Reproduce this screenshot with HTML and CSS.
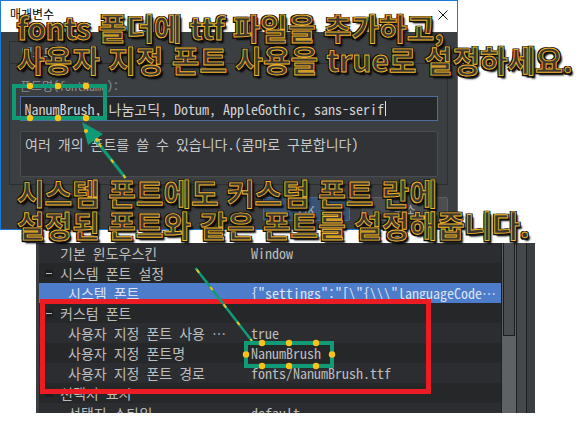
FILE: index.html
```html
<!DOCTYPE html>
<html lang="ko">
<head>
<meta charset="utf-8">
<title>매개변수</title>
<link rel="stylesheet" href="styles.css">
</head>
<body>
<div class="canvas">
  <div class="dialog">
    <div class="titlebar">
      <span class="title">매개변수</span>
      <svg class="close" width="10" height="10" viewBox="0 0 10 10"><path d="M0.5 0.5 L9.5 9.5 M9.5 0.5 L0.5 9.5" stroke="#111" stroke-width="1" fill="none"/></svg>
    </div>
    <div class="dialog-body">
      <div class="tabs"><div class="tab">텍스트</div></div>
      <div class="tabpane">
        <div class="label">폰트명(fontName):</div>
        <div class="input">NanumBrush, 나눔고딕, Dotum, AppleGothic, sans-serif<span class="caret"></span></div>
        <div class="textarea">여러 개의 폰트를 쓸 수 있습니다.(콤마로 구분합니다)</div>
      </div>
      <div class="buttons">
        <div class="btn btn-ok">OK</div>
        <div class="btn btn-cancel">취소</div>
      </div>
    </div>
  </div>

  <div class="props">
    <div class="rows">
      <div class="row odd"><span class="name lvl1">기본 윈도우스킨</span><span class="value">Window</span></div>
      <div class="row even"><span class="name cat"><span class="toggle"></span>시스템 폰트 설정</span></div>
      <div class="row selected"><span class="name lvl2">시스템 폰트</span><span class="value">{"settings":"[\"{\\\"languageCode…</span></div>
      <div class="row even"><span class="name cat"><span class="toggle"></span>커스텀 폰트</span></div>
      <div class="row odd"><span class="name lvl2">사용자 지정 폰트 사용 …</span><span class="value">true</span></div>
      <div class="row even"><span class="name lvl2">사용자 지정 폰트명</span><span class="value">NanumBrush</span></div>
      <div class="row odd"><span class="name lvl2">사용자 지정 폰트 경로</span><span class="value">fonts/NanumBrush.ttf</span></div>
      <div class="row even"><span class="name cat"><span class="toggle"></span>선택지 표시</span></div>
      <div class="row odd"><span class="name lvl2">선택지 스타일</span><span class="value">default</span></div>
    </div>
    <div class="scroll">
      <div class="track"><div class="thumb"></div></div>
      <div class="strip strip-a"></div>
      <div class="strip strip-b"></div>
    </div>
  </div>

  <svg class="annot" width="577" height="441" viewBox="0 0 577 441">
    <rect x="42.5" y="301.5" width="386" height="90" fill="none" stroke="#ec1c24" stroke-width="5"/>
    <rect x="14" y="86" width="91" height="32" fill="none" stroke="#109a76" stroke-width="4"/>
    <g fill="#f8c21a">
      <circle cx="30" cy="86" r="3.2"/><circle cx="58" cy="86" r="3.2"/><circle cx="86" cy="86" r="3.2"/>
      <circle cx="30" cy="118" r="3.2"/><circle cx="58" cy="118" r="3.2"/><circle cx="86" cy="118" r="3.2"/>
    </g>
    <line x1="95" y1="139" x2="125.5" y2="178" stroke="#109a76" stroke-width="3"/>
    <line x1="95" y1="139" x2="125.5" y2="178" stroke="#f5c21a" stroke-width="2" stroke-dasharray="4 16" stroke-dashoffset="-6"/>
    <line x1="195.5" y1="268" x2="252" y2="341" stroke="#109a76" stroke-width="2.5"/>
    <line x1="195.5" y1="268" x2="252" y2="341" stroke="#f5c21a" stroke-width="2" stroke-dasharray="4 18" stroke-dashoffset="-2"/>
    <polygon points="82,122 103,134 88,145" fill="#109a76"/>
    <circle cx="86" cy="131" r="2" fill="#f8c21a"/>
    <circle cx="97" cy="140" r="2" fill="#f8c21a"/>
    <rect x="246" y="343" width="86" height="23" fill="none" stroke="#109a76" stroke-width="4"/>
    <g fill="#f8c21a">
      <circle cx="262" cy="343" r="3.2"/><circle cx="289" cy="343" r="3.2"/><circle cx="316" cy="343" r="3.2"/>
      <circle cx="262" cy="366" r="3.2"/><circle cx="289" cy="366" r="3.2"/><circle cx="316" cy="366" r="3.2"/>
      <circle cx="246" cy="354.5" r="3.2"/><circle cx="332" cy="354.5" r="3.2"/>
    </g>
  </svg>

  <div class="caption cap-top"><span class="lat">fonts</span> 폴더에 <span class="lat">ttf</span> 파일을 추가하고,<br>사용자 지정 폰트 사용을 true로 설정하세요.</div>
  <div class="caption cap-bottom">시스템 폰트에도 커스텀 폰트 란에<br>설정된 폰트와 같은 폰트를 설정해줍니다.</div>
</div>
</body>
</html>
```

FILE: styles.css
```css
* { box-sizing: border-box; }
body { margin: 0; background: #fff; }

.canvas {
  position: relative;
  width: 577px;
  height: 441px;
  overflow: hidden;
  background: #fff;
  font-family: "Noto Sans Mono CJK KR", "Noto Sans CJK KR", "DejaVu Sans Mono", monospace;
}

/* dialog window */
.dialog {
  position: absolute;
  left: 0;
  top: 0;
  width: 458px;
  border: 1px solid #1a7ad6;
  background: #3c3f41;
  display: flex;
  flex-direction: column;
}
.titlebar {
  height: 31px;
  background: #fff;
  display: flex;
  justify-content: space-between;
  align-items: flex-start;
  padding: 6px 9px 0 9px;
}
.title {
  font-family: "Noto Sans CJK KR", sans-serif;
  font-size: 12px;
  line-height: 14px;
  color: #000;
}
.close { margin-top: 3px; }

.dialog-body {
  display: flex;
  flex-direction: column;
  padding: 9px 9px 8px 8px;
}
.tabs { display: flex; }
.tab {
  width: 58px;
  height: 22px;
  border: 1px solid #2c2e30;
  border-bottom: none;
  color: #b4b4b4;
  font-size: 12px;
  display: flex;
  align-items: center;
  justify-content: center;
}
.tabpane {
  border: 1px solid #2c2e30;
  padding: 14px 9px 7px 10px;
  display: flex;
  flex-direction: column;
}
.label {
  height: 16px;
  font-size: 12px;
  line-height: 16px;
  color: #8d9093;
}
.input {
  margin-top: 2px;
  height: 25px;
  border: 1.5px solid #4c6f9f;
  background: #25272a;
  color: #d2d2d2;
  font-size: 14px;
  line-height: 22px;
  padding-left: 3.5px;
  white-space: nowrap;
  display: flex;
  align-items: center;
}
.caret {
  width: 1px;
  height: 15px;
  background: #e0e0e0;
  margin-left: 1px;
}
.textarea {
  margin-top: 10px;
  height: 46px;
  border: 1px solid #4a4c4f;
  border-radius: 2px;
  background: #313336;
  color: #c8c8c8;
  font-size: 14px;
  line-height: 20px;
  padding: 2px 4px;
  white-space: nowrap;
}
.buttons {
  margin-top: 12px;
  display: flex;
  justify-content: flex-end;
  gap: 12px;
}
.btn {
  height: 24px;
  border-radius: 2px;
  display: flex;
  align-items: center;
  justify-content: center;
  font-family: "Noto Sans CJK KR", sans-serif;
  font-size: 12px;
}
.btn-ok {
  width: 87px;
  background: #385373;
  border: 1px solid #4b6a92;
  color: #a6b6ca;
}
.btn-cancel {
  width: 86px;
  background: #4b4e51;
  border: 1px solid #5c5f62;
  color: #a8a8a8;
}

/* property grid */
.props {
  position: absolute;
  left: 36px;
  top: 243px;
  width: 499px;
  height: 170px;
  background: #3b3e41;
  display: flex;
  overflow: hidden;
}
.rows {
  margin-left: 3px;
  width: 462px;
  display: flex;
  flex-direction: column;
}
.row {
  height: 20px;
  flex: none;
  display: flex;
  align-items: center;
  color: #bdbdbd;
  font-size: 14px;
  white-space: nowrap;
}
.row.odd { background: #2b2d30; }
.row.even { background: #252729; }
.row.selected { background: #4d7cca; color: #dbe3f4; }
.name {
  width: 212px;
  flex: none;
  display: flex;
  align-items: center;
  overflow: hidden;
}
.lvl1 { padding-left: 21px; }
.lvl2 { padding-left: 29px; }
.cat { padding-left: 6px; }
.toggle {
  width: 8px;
  height: 7px;
  background: #1d1e20;
  margin-right: 7px;
  position: relative;
}
.toggle::after {
  content: "";
  position: absolute;
  left: 1px;
  top: 3px;
  width: 6px;
  height: 1px;
  background: #bcbcbc;
}
.value { overflow: hidden; }

.scroll {
  width: 34px;
  display: flex;
}
.track {
  width: 16px;
  background: #5e6265;
  border-left: 1px solid #1e1f21;
  border-right: 1px solid #1e1f21;
  padding: 0 1px;
}
.thumb {
  height: 93px;
  background: #4a4d50;
  border: 1px solid #1b1c1e;
  border-top: none;
}
.strip-a {
  width: 10px;
  background: #45484b;
  border-right: 1px solid #1e1f21;
}
.strip-b {
  width: 8px;
  background: #3b3e41;
}

/* annotations */
.annot {
  position: absolute;
  left: 0;
  top: 0;
}
.caption {
  position: absolute;
  left: 17px;
  font-family: "Noto Sans CJK KR", sans-serif;
  font-weight: 700;
  font-size: 30px;
  line-height: 32px;
  color: #3a382f;
  -webkit-text-stroke: 0.9px #f3b42a;
  text-shadow: 1.5px 1.5px 0 #111, -1.5px -1.5px 0 #111, 1.5px -1.5px 0 #111, -1.5px 1.5px 0 #111, 2.5px 2.5px 2px #000;
  white-space: nowrap;
}
.lat { letter-spacing: -0.5px; }
.cap-top { top: 11px; }
.cap-bottom { top: 176px; }
```
